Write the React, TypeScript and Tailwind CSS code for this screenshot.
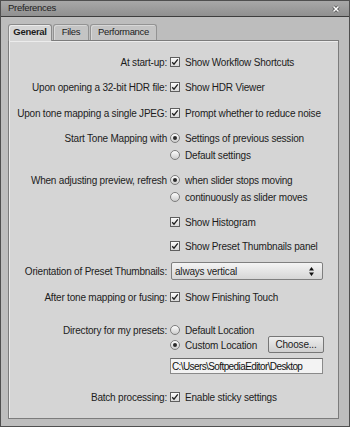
import type { ReactNode } from 'react';

const CheckBox = () => (
  <span className="flex h-[10px] w-[10px] shrink-0 items-center justify-center border border-[#5e5e5e] bg-linear-to-b from-[#fbfbfb] to-[#d9d9d9]">
    <svg width="8" height="8" viewBox="0 0 8 8">
      <path d="M1.2 4.2 L3 6.2 L6.8 1.4" fill="none" stroke="#1f1f1f" strokeWidth="1.3" />
    </svg>
  </span>
);

const Radio = ({ on }: { on?: boolean }) => (
  <span className="flex h-[10px] w-[10px] shrink-0 items-center justify-center rounded-full border border-[#7d7d7d] bg-linear-to-b from-[#fdfdfd] to-[#cdcdcd]">
    {on && <span className="h-[4px] w-[4px] rounded-full bg-[#2b2b2b]" />}
  </span>
);

const Row = ({ label, children, className = '' }: { label?: string; children: ReactNode; className?: string }) => (
  <div className={`flex items-center ${className}`}>
    <div className="w-[158px] shrink-0 text-right">{label}</div>
    <div className="ml-[3px] flex items-center">{children}</div>
  </div>
);

const Opt = ({ text, radio, on }: { text: string; radio?: boolean; on?: boolean }) => (
  <span className="flex items-center">
    {radio ? <Radio on={on} /> : <CheckBox />}
    <span className="ml-[5px] whitespace-nowrap">{text}</span>
  </span>
);

export default function App() {
  return (
    <div className="flex h-[427px] w-[350px] flex-col border border-[#4f4f4f] bg-[#bdbdbd] font-['Liberation_Sans',Arial,sans-serif] text-[10px] tracking-[-0.2px] text-[#1c1c1c]">
      <div className="flex h-[16px] shrink-0 items-center justify-between border-b border-[#3d3d3d] bg-linear-to-b from-[#a8a8a8] to-[#909090] pl-[7px] pr-[9px]">
        <span className="text-[9.5px] tracking-[-0.3px] text-[#222]">Preferences</span>
        <svg width="8" height="8" viewBox="0 0 8 8">
          <path d="M1.5 1.5 L6.5 6.5 M6.5 1.5 L1.5 6.5" stroke="#444" strokeWidth="3" />
          <path d="M1.5 1.5 L6.5 6.5 M6.5 1.5 L1.5 6.5" stroke="#fff" strokeWidth="1.6" />
        </svg>
      </div>

      <div className="flex flex-col pl-[7px] pt-[7px]">
        <div className="flex items-end gap-[1px] text-[9.5px] tracking-[-0.3px]">
          <div className="relative z-10 -mb-[1px] flex h-[17px] w-[44px] items-center justify-center rounded-t-[3px] border border-b-0 border-[#8a8a8a] bg-[#d5d5d5] pb-[1px] font-bold shadow-[inset_1px_1px_0_#ececec]">
            General
          </div>
          <div className="flex h-[16px] w-[36px] items-center justify-center rounded-t-[3px] border border-b-0 border-[#939393] bg-[#c4c4c4] shadow-[inset_1px_1px_0_#d8d8d8]">
            Files
          </div>
          <div className="flex h-[16px] w-[67px] items-center justify-center rounded-t-[3px] border border-b-0 border-[#939393] bg-[#c4c4c4] shadow-[inset_1px_1px_0_#d8d8d8]">
            Performance
          </div>
        </div>

        <div className="flex h-[379px] w-[331px] flex-col border border-[#7c7c7c] bg-[#d5d5d5] pt-[13px] shadow-[inset_1px_1px_0_#ececec]">
          <Row label="At start-up:" className="h-[16px]">
            <Opt text="Show Workflow Shortcuts" />
          </Row>
          <Row label="Upon opening a 32-bit HDR file:" className="mt-[9px] h-[16px]">
            <Opt text="Show HDR Viewer" />
          </Row>
          <Row label="Upon tone mapping a single JPEG:" className="mt-[10px] h-[16px]">
            <Opt text="Prompt whether to reduce noise" />
          </Row>
          <Row label="Start Tone Mapping with" className="mt-[9px] h-[16px]">
            <Opt radio on text="Settings of previous session" />
          </Row>
          <Row className="mt-[1px] h-[16px]">
            <Opt radio text="Default settings" />
          </Row>
          <Row label="When adjusting preview, refresh" className="mt-[9px] h-[16px]">
            <Opt radio on text="when slider stops moving" />
          </Row>
          <Row className="mt-[1px] h-[16px]">
            <Opt radio text="continuously as slider moves" />
          </Row>
          <Row className="mt-[9px] h-[16px]">
            <Opt text="Show Histogram" />
          </Row>
          <Row className="mt-[8px] h-[16px]">
            <Opt text="Show Preset Thumbnails panel" />
          </Row>
          <Row label="Orientation of Preset Thumbnails:" className="mt-[8px] h-[18px]">
            <div className="ml-[1px] flex h-[18px] w-[152px] items-center justify-between rounded-[2px] border border-[#7f7f7f] bg-linear-to-b from-[#f4f4f4] to-[#d6d6d6] pl-[3px] pr-[8px]">
              <span>always vertical</span>
              <svg width="5" height="9" viewBox="0 0 5 9">
                <path d="M2.5 0 L5 3.5 L0 3.5 Z M2.5 9 L5 5.5 L0 5.5 Z" fill="#111" />
              </svg>
            </div>
          </Row>
          <Row label="After tone mapping or fusing:" className="mt-[9px] h-[16px]">
            <Opt text="Show Finishing Touch" />
          </Row>
          <Row label="Directory for my presets:" className="mt-[19px] h-[12px]">
            <Opt radio text="Default Location" />
          </Row>
          <div className="flex h-[18px] items-start">
            <div className="w-[158px] shrink-0" />
            <div className="ml-[3px] flex h-[16px] w-[98px] items-center pt-[2px]">
              <Opt radio on text="Custom Location" />
            </div>
            <div className="flex h-[17px] w-[56px] items-center justify-center rounded-[2px] border border-[#767676] bg-linear-to-b from-[#eeeeee] to-[#cfcfcf] text-[10px]">
              Choose...
            </div>
          </div>
          <Row className="mt-[4px] h-[16px]">
            <div className="flex h-[16px] w-[153px] items-center border border-[#8a8a8a] border-t-[#6c6c6c] bg-[#f3f3f3] pl-[1px] text-[10px] tracking-[-0.6px] text-[#111]">
              C:\Users\SoftpediaEditor\Desktop
            </div>
          </Row>
          <Row label="Batch processing:" className="mt-[15px] h-[16px]">
            <Opt text="Enable sticky settings" />
          </Row>
        </div>
      </div>
    </div>
  );
}
